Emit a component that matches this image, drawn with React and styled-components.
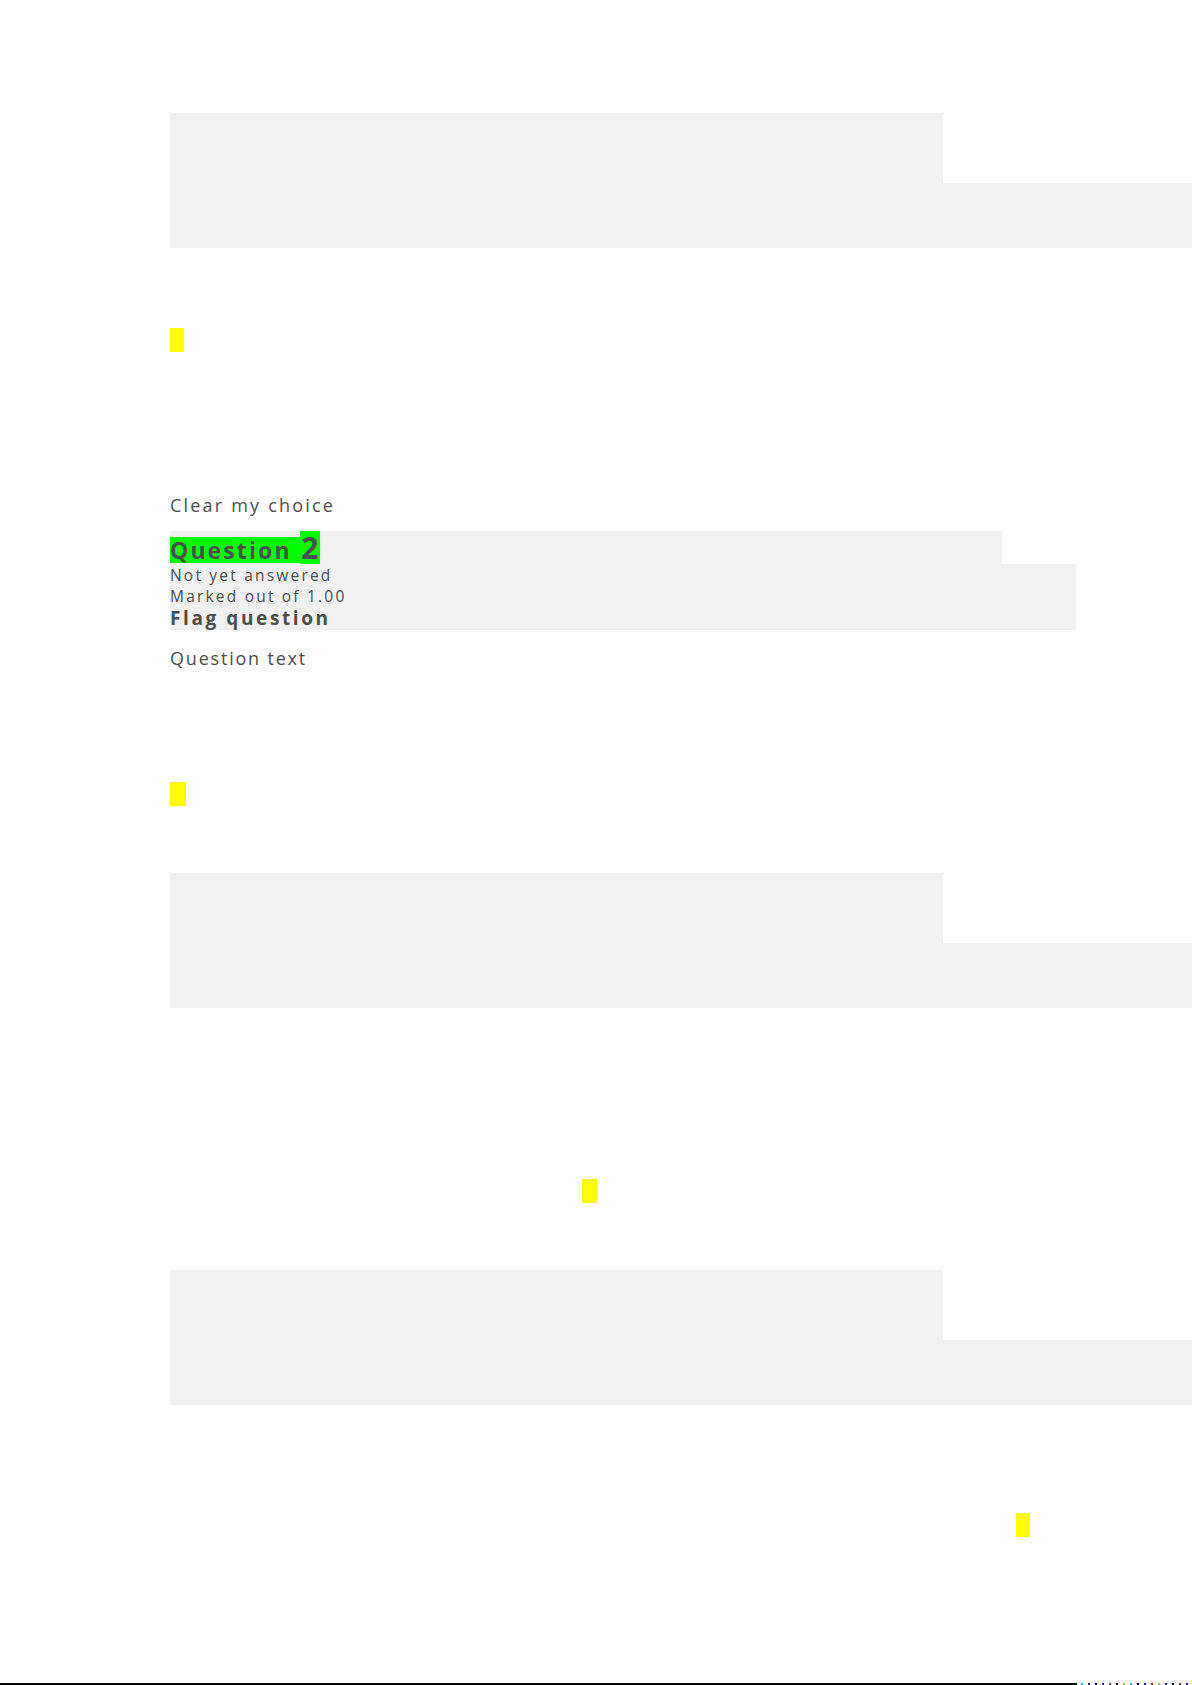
import React from 'react';
import styled, { createGlobalStyle } from 'styled-components';

const GlobalStyle = createGlobalStyle`
  html, body {
    margin: 0;
    padding: 0;
    background: #ffffff;
  }
  body {
    font-family: 'Open Sans', 'Liberation Sans', sans-serif;
    color: #4e4e4e;
    overflow: hidden;
  }
`;

const StyledPage = styled.div`
  width: 1192px;
  height: 1685px;
  display: flex;
  flex-direction: column;
  overflow: hidden;
`;

const StyledContent = styled.div`
  display: flex;
  flex-direction: column;
  align-items: flex-start;
  padding: 113px 0 0 170px;
  flex: 1;
`;

// L shaped grey answer box: short upper strip, wide lower strip
const StyledAnswerBox = styled.div`
  display: flex;
  flex-direction: column;
  margin-top: ${(p) => p.$top || 0}px;
`;

const StyledStrip = styled.div`
  background: #f1f1f1;
  width: ${(p) => p.$width}px;
  height: ${(p) => p.$height}px;
`;

const StyledMark = styled.span`
  display: block;
  background: #ffff00;
  width: ${(p) => p.$width || 14}px;
  height: 24px;
  margin-top: ${(p) => p.$top}px;
  margin-left: ${(p) => p.$left || 0}px;
`;

const StyledText = styled.div`
  font-size: 18px;
  line-height: 24px;
  letter-spacing: ${(p) => p.$spacing}px;
  margin-top: ${(p) => p.$top}px;
`;

const StyledInfo = styled.div`
  display: flex;
  flex-direction: column;
  margin-top: 14px;
`;

const StyledHeading = styled.div`
  display: flex;
  align-items: flex-start;
  background: #f1f1f1;
  width: 832px;
  height: 33px;
  font-weight: 700;
`;

const StyledHighlight = styled.span`
  display: inline-block;
  background: #00ff00;
  white-space: pre;
  margin-top: ${(p) => p.$top || 0}px;
  padding: 0 ${(p) => p.$pad || 0}px;
  height: ${(p) => p.$height}px;
  line-height: ${(p) => p.$height}px;
  font-size: ${(p) => p.$size}px;
  letter-spacing: ${(p) => p.$spacing || 0}px;
`;

const StyledMeta = styled.div`
  display: flex;
  flex-direction: column;
  background: #f1f1f1;
  width: 906px;
  height: 66px;
  padding-top: 1px;
  box-sizing: border-box;
`;

const StyledMetaLine = styled.div`
  font-size: 15.5px;
  line-height: 21px;
  letter-spacing: 2.2px;
  white-space: nowrap;
`;

const StyledFlag = styled.div`
  font-size: 19px;
  line-height: 23px;
  letter-spacing: 2.6px;
  font-weight: 700;
  white-space: nowrap;
`;

const StyledFooter = styled.div`
  display: flex;
  align-items: flex-end;
  height: 2px;
`;

const StyledRule = styled.div`
  width: 1077px;
  height: 2px;
  background: #000000;
`;

const StyledDots = styled.div`
  display: flex;
  gap: 5px;
  margin-left: 4px;
`;

const StyledDot = styled.span`
  display: block;
  width: 2px;
  height: 2px;
  background: ${(p) => p.$color};
`;

const dots = ['#00c8c8', '#202080', '#000000', '#2020c0', '#c02020', '#000000', '#c0c000', '#00c8c8', '#000000', '#2020c0', '#c02020', '#c0c000', '#2020c0', '#000000', '#c02020', '#2020c0'];

const AnswerBox = ({ top }) => (
  <StyledAnswerBox $top={top}>
    <StyledStrip $width={773} $height={70} />
    <StyledStrip $width={1022} $height={65} />
  </StyledAnswerBox>
);

const App = () => (
  <>
    <GlobalStyle />
    <StyledPage>
      <StyledContent>
        <AnswerBox top={0} />
        <StyledMark $top={80} />
        <StyledText $top={141} $spacing={2.2}>
          Clear my choice
        </StyledText>
        <StyledInfo>
          <StyledHeading>
            <StyledHighlight $top={6} $height={26} $size={23} $spacing={2.1}>
              {'Question '}
            </StyledHighlight>
            <StyledHighlight $height={34} $size={30} $pad={1.5}>
              2
            </StyledHighlight>
          </StyledHeading>
          <StyledMeta>
            <StyledMetaLine>Not yet answered</StyledMetaLine>
            <StyledMetaLine>Marked out of 1.00</StyledMetaLine>
            <StyledFlag>Flag question</StyledFlag>
          </StyledMeta>
        </StyledInfo>
        <StyledText $top={16} $spacing={1.8}>
          Question text
        </StyledText>
        <StyledMark $top={112} $width={16} />
        <AnswerBox top={67} />
        <StyledMark $top={171} $left={412} $width={15} />
        <AnswerBox top={67} />
        <StyledMark $top={108} $left={846} />
      </StyledContent>
      <StyledFooter>
        <StyledRule />
        <StyledDots>
          {dots.map((c, i) => (
            <StyledDot key={i} $color={c} />
          ))}
        </StyledDots>
      </StyledFooter>
    </StyledPage>
  </>
);

export default App;
